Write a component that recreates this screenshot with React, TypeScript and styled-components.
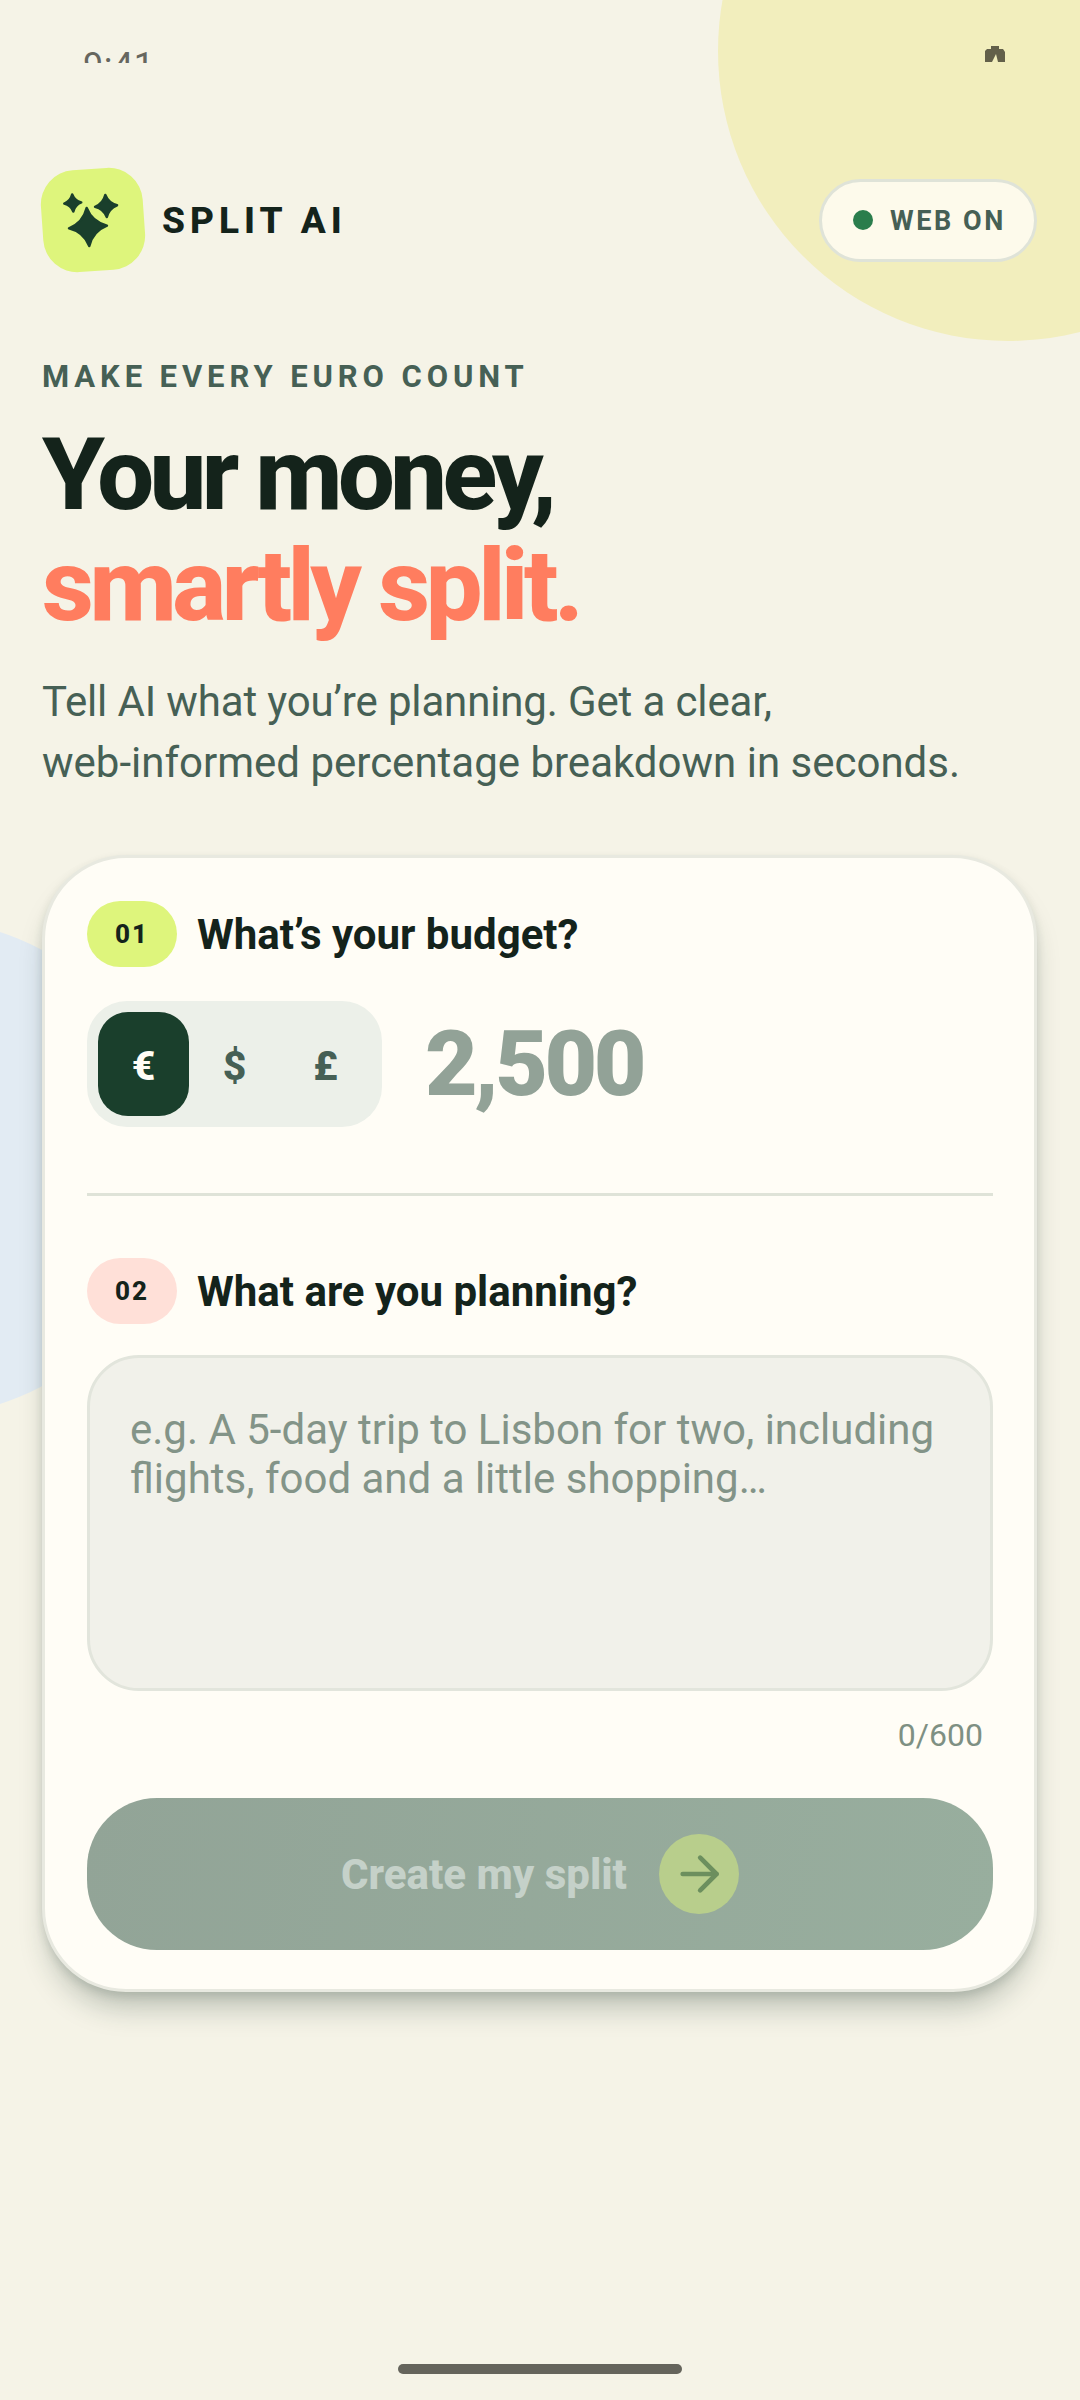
import React from "react";
import styled, { createGlobalStyle } from "styled-components";

const Global = createGlobalStyle`
  html, body { margin: 0; padding: 0; background: #F5F3E7; }
  * { box-sizing: border-box; }
`;

const Page = styled.div`
  position: relative;
  width: 1080px;
  height: 2400px;
  overflow: hidden;
  background: #f5f3e7;
  font-family: Roboto, "Liberation Sans", sans-serif;
  color: #14231b;
  display: flex;
  flex-direction: column;
`;

const Blob = styled.div<{ $color: string; $size: number; $top: number; $left: number }>`
  position: absolute;
  width: ${(p) => p.$size}px;
  height: ${(p) => p.$size}px;
  top: ${(p) => p.$top}px;
  left: ${(p) => p.$left}px;
  border-radius: 50%;
  background: ${(p) => p.$color};
`;

const StatusBar = styled.div`
  position: relative;
  height: 63px;
  overflow: hidden;
  flex: none;
  display: flex;
  justify-content: space-between;
  padding: 46px 75px 0 83px;
`;

const Clock = styled.div`
  font-size: 36px;
  line-height: 40px;
  font-weight: 400;
  letter-spacing: 0.5px;
  color: #66665f;
`;

const Main = styled.div`
  position: relative;
  flex: 1;
  display: flex;
  flex-direction: column;
  padding: 0 43px 0 42px;
`;

const Header = styled.header`
  display: flex;
  align-items: center;
  justify-content: space-between;
  margin-top: 106px;
`;

const Brand = styled.div`
  display: flex;
  align-items: center;
  gap: 18px;
`;

const Logo = styled.div`
  width: 102px;
  height: 102px;
  border-radius: 34px;
  background: #def57c;
  transform: rotate(-4deg);
  flex: none;
  display: flex;
  align-items: center;
  justify-content: center;
`;

const BrandName = styled.div`
  padding-top: 2px;
  font-size: 37px;
  line-height: 44px;
  font-weight: 800;
  letter-spacing: 5px;
  color: #14231b;
`;

const WebPill = styled.div`
  display: flex;
  align-items: center;
  gap: 17px;
  height: 83px;
  padding: 0 28px 0 31px;
  border: 3px solid #dfe3d8;
  border-radius: 42px;
  background: #fdfaeb;
`;

const Dot = styled.span`
  width: 20px;
  height: 20px;
  border-radius: 50%;
  background: #2a7d4c;
`;

const PillText = styled.span`
  padding-top: 2px;
  font-size: 27px;
  line-height: 32px;
  font-weight: 700;
  letter-spacing: 2.6px;
  color: #466055;
`;

const Eyebrow = styled.div`
  margin-top: 88px;
  font-size: 31px;
  line-height: 36px;
  font-weight: 700;
  letter-spacing: 4.9px;
  color: #466055;
`;

const Title = styled.h1`
  margin: 24px 0 0;
  font-size: 101px;
  line-height: 111px;
  font-weight: 800;
  letter-spacing: -4.6px;
  color: #14231b;
`;

const Accent = styled.span`
  display: block;
  letter-spacing: -4.4px;
  color: #ff7d5f;
`;

const Lead = styled.p`
  margin: 30px 0 0;
  font-size: 42px;
  line-height: 61px;
  font-weight: 400;
  color: #466055;
`;

const LeadLine = styled.span<{ $spacing?: number }>`
  display: block;
  letter-spacing: ${(p) => p.$spacing ?? 0}px;
`;

const Card = styled.section`
  margin-top: 62px;
  width: 995px;
  height: 1137px;
  padding: 43px 41px 0 42px;
  border: 3px solid #e8e9e0;
  border-radius: 84px;
  background: #fffdf6;
  box-shadow: 0 22px 30px -8px rgba(26, 50, 40, 0.28), 0 4px 10px rgba(26, 50, 40, 0.12);
  display: flex;
  flex-direction: column;
`;

const StepRow = styled.div`
  display: flex;
  align-items: center;
  gap: 20px;
`;

const StepBadge = styled.span<{ $bg: string }>`
  width: 90px;
  height: 66px;
  border-radius: 33px;
  background: ${(p) => p.$bg};
  display: flex;
  align-items: center;
  justify-content: center;
  font-size: 26px;
  font-weight: 800;
  letter-spacing: 2px;
  color: #14231b;
`;

const StepLabel = styled.span`
  padding-top: 2px;
  font-size: 42px;
  line-height: 48px;
  font-weight: 700;
  color: #14231b;
`;

const BudgetRow = styled.div`
  display: flex;
  align-items: center;
  gap: 43px;
  margin-top: 34px;
`;

const Currencies = styled.div`
  width: 295px;
  height: 126px;
  padding: 11px;
  border-radius: 40px;
  background: #ecf0e9;
  display: flex;
`;

const Currency = styled.div<{ $active?: boolean }>`
  flex: 1;
  padding-top: 3px;
  border-radius: 30px;
  display: flex;
  align-items: center;
  justify-content: center;
  font-size: 41px;
  font-weight: 800;
  background: ${(p) => (p.$active ? "#1a3f2c" : "transparent")};
  color: ${(p) => (p.$active ? "#fffdf6" : "#466055")};
`;

const Amount = styled.div`
  font-size: 91px;
  line-height: 106px;
  font-weight: 900;
  letter-spacing: -3.5px;
  color: #92a297;
`;

const Divider = styled.hr`
  margin: 66px 0 0;
  height: 3px;
  border: 0;
  background: #dfe3d8;
`;

const SecondStep = styled(StepRow)`
  margin-top: 62px;
`;

const PlanBox = styled.div`
  margin-top: 31px;
  height: 336px;
  padding: 47px 40px;
  border: 3px solid #e2e5dc;
  border-radius: 52px;
  background: #f1f1ea;
  font-size: 42px;
  line-height: 49px;
  color: #839488;
`;

const Counter = styled.div`
  margin-top: 25px;
  padding-right: 10px;
  text-align: right;
  font-size: 32px;
  line-height: 38px;
  color: #7e9083;
`;

const CreateButton = styled.div`
  margin-top: 44px;
  height: 152px;
  border-radius: 70px;
  background: linear-gradient(100deg, #92a497, #98ae9e);
  display: flex;
  align-items: center;
  justify-content: center;
  gap: 32px;
`;

const CreateText = styled.span`
  padding-top: 2px;
  font-size: 42px;
  line-height: 48px;
  font-weight: 800;
  color: #c5d1c9;
`;

const ArrowCircle = styled.span`
  width: 80px;
  height: 80px;
  border-radius: 50%;
  background: #b8ce8c;
  display: flex;
  align-items: center;
  justify-content: center;
`;

const HomeIndicator = styled.div`
  position: absolute;
  left: 398px;
  bottom: 26px;
  width: 284px;
  height: 10px;
  border-radius: 5px;
  background: #65645c;
`;

const starPath = (cx: number, cy: number, r: number) => {
  const k = r * 0.24;
  return `M${cx} ${cy - r}Q${cx + k} ${cy - k} ${cx + r} ${cy}Q${cx + k} ${cy + k} ${cx} ${cy + r}Q${cx - k} ${cy + k} ${cx - r} ${cy}Q${cx - k} ${cy - k} ${cx} ${cy - r}Z`;
};

const Sparkles = () => (
  <svg width="96" height="96" viewBox="0 0 96 96" fill="#1a3f2c" stroke="#1a3f2c" strokeWidth="2.5" strokeLinejoin="round">
    <path d={starPath(42.5, 54.6, 19)} />
    <path d={starPath(29, 29.6, 8.5)} />
    <path d={starPath(62, 35, 11)} />
  </svg>
);

const ClippedIcon = () => (
  <svg width="20" height="16" viewBox="0 0 20 16" fill="#63604a">
    <path d="M0 16V5L2 3H6V0H14V3H18L20 6V16H13L11 8 7 16Z" />
  </svg>
);

const Arrow = () => (
  <svg width="56" height="56" viewBox="0 0 24 24" fill="none" stroke="#6c8f5e" strokeWidth="2" strokeLinecap="round" strokeLinejoin="round">
    <path d="M5 12h14.5" />
    <path d="m12.5 5 7 7-7 7" />
  </svg>
);

export default function App() {
  return (
    <Page>
      <Global />
      <Blob $color="#f2eebd" $size={580} $top={-239} $left={718} />
      <Blob $color="#e2ebf3" $size={496} $top={920} $left={-324} />
      <StatusBar>
        <Clock>9:41</Clock>
        <ClippedIcon />
      </StatusBar>
      <Main>
        <Header>
          <Brand>
            <Logo>
              <Sparkles />
            </Logo>
            <BrandName>SPLIT AI</BrandName>
          </Brand>
          <WebPill>
            <Dot />
            <PillText>WEB ON</PillText>
          </WebPill>
        </Header>
        <Eyebrow>MAKE EVERY EURO COUNT</Eyebrow>
        <Title>
          Your money,
          <Accent>smartly split.</Accent>
        </Title>
        <Lead>
          <LeadLine $spacing={-0.14}>Tell AI what you’re planning. Get a clear,</LeadLine>
          <LeadLine>web-informed percentage breakdown in seconds.</LeadLine>
        </Lead>
        <Card>
          <StepRow>
            <StepBadge $bg="#def57c">01</StepBadge>
            <StepLabel>What’s your budget?</StepLabel>
          </StepRow>
          <BudgetRow>
            <Currencies>
              <Currency $active>€</Currency>
              <Currency>$</Currency>
              <Currency>£</Currency>
            </Currencies>
            <Amount>2,500</Amount>
          </BudgetRow>
          <Divider />
          <SecondStep>
            <StepBadge $bg="#ffe0d8">02</StepBadge>
            <StepLabel>What are you planning?</StepLabel>
          </SecondStep>
          <PlanBox>
            e.g. A 5-day trip to Lisbon for two, including flights, food and a little shopping…
          </PlanBox>
          <Counter>0/600</Counter>
          <CreateButton>
            <CreateText>Create my split</CreateText>
            <ArrowCircle>
              <Arrow />
            </ArrowCircle>
          </CreateButton>
        </Card>
      </Main>
      <HomeIndicator />
    </Page>
  );
}
